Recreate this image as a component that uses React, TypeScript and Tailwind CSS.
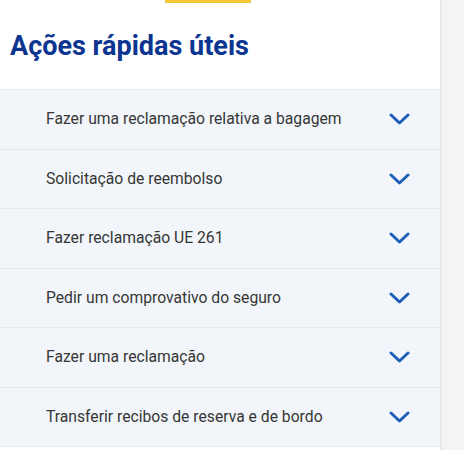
const actions = [
  "Fazer uma reclamação relativa a bagagem",
  "Solicitação de reembolso",
  "Fazer reclamação UE 261",
  "Pedir um comprovativo do seguro",
  "Fazer uma reclamação",
  "Transferir recibos de reserva e de bordo",
];

function Chevron() {
  return (
    <svg width="21" height="12" viewBox="0 0 21 12" fill="none" className="shrink-0">
      <path
        d="M2 2l8.5 8 8.5-8"
        stroke="#1d5fb8"
        strokeWidth="3"
        strokeLinecap="round"
        strokeLinejoin="round"
      />
    </svg>
  );
}

export default function App() {
  return (
    <div
      className="flex h-[450px] w-[464px] overflow-hidden bg-[#f4f4f4]"
      style={{ fontFamily: "Roboto, 'Liberation Sans', sans-serif" }}
    >
      <div className="flex w-[440px] flex-col bg-white">
        <div className="ml-[165px] h-[3px] w-[86px] bg-[#f5c533]" />
        <h2 className="mt-[27px] pl-[10px] text-[27px] font-bold leading-[33px] text-[#0b3590]">
          Ações rápidas úteis
        </h2>
        <ul className="mt-[26px] border-t border-[#e3e8ee]">
          {actions.map((label) => (
            <li
              key={label}
              className="flex h-[59.5px] items-center justify-between border-b border-[#e3e8ee] bg-[#f2f6fa] pl-[46px] pr-[30px]"
            >
              <span className="text-[15.7px] text-[#363636]">{label}</span>
              <Chevron />
            </li>
          ))}
        </ul>
      </div>
      <div className="w-[2px] bg-[#e9e9e9]" />
    </div>
  );
}
